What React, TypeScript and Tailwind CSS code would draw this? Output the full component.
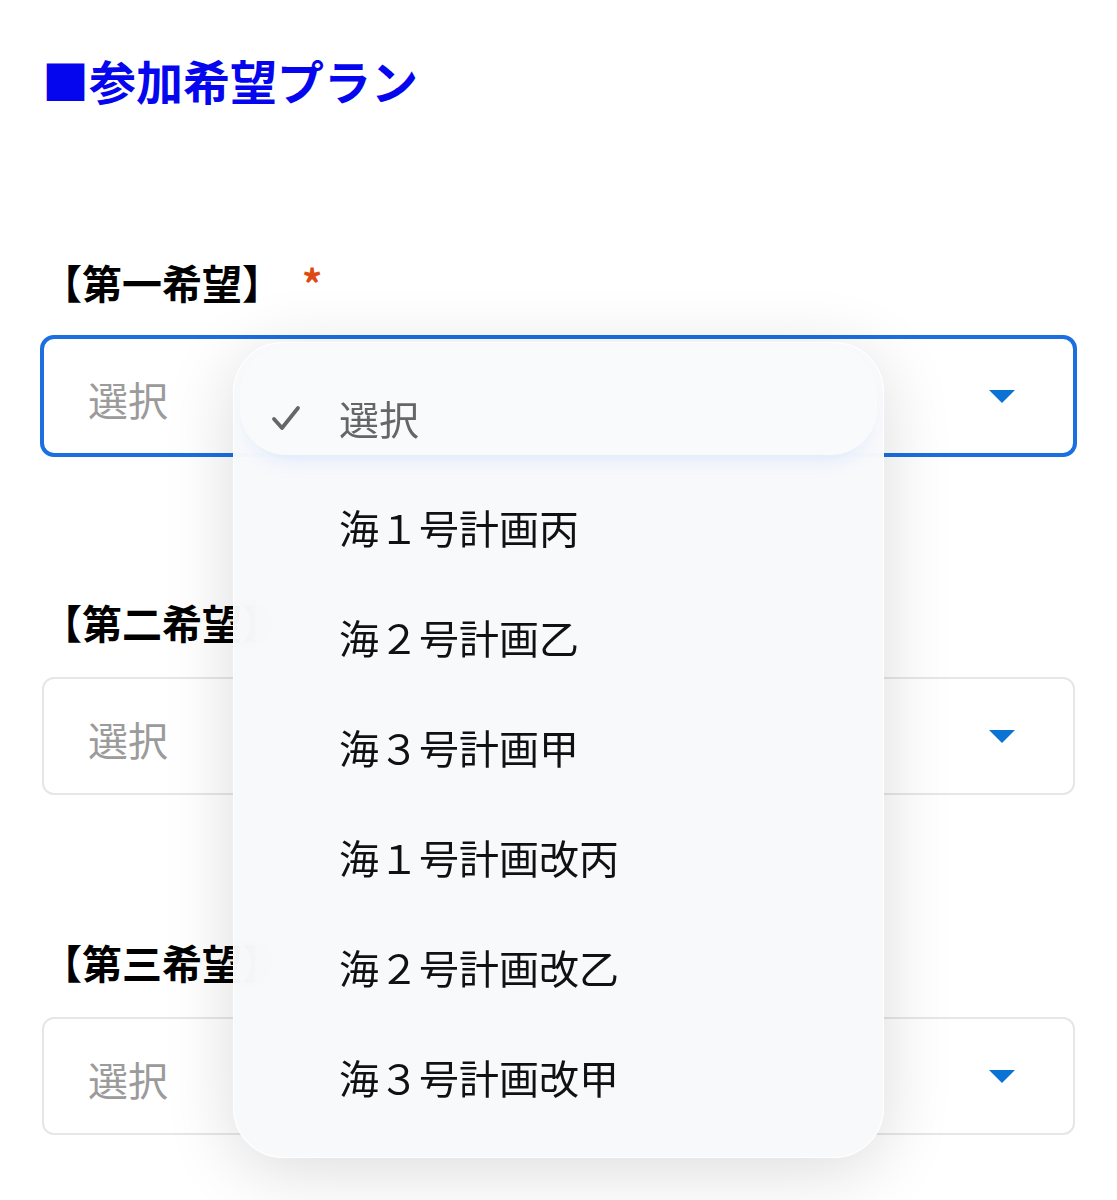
import type React from 'react';

const FONT = '"Noto Sans CJK JP", "Noto Sans", sans-serif';

const PLANS = [
  '海１号計画丙',
  '海２号計画乙',
  '海３号計画甲',
  '海１号計画改丙',
  '海２号計画改乙',
  '海３号計画改甲',
];

/** 下向き三角（セレクトの開閉マーク） */
function Caret(): React.ReactElement {
  return (
    <svg width="26" height="13" viewBox="0 0 26 13" aria-hidden="true">
      <polygon points="0,0 26,0 13,13" fill="#0b73d3" />
    </svg>
  );
}

function Field({ label, focused }: { label: string; focused?: boolean }): React.ReactElement {
  return (
    <div className="flex flex-col">
      <div className="flex items-center h-[48px]">
        <span className="text-[40px] leading-[48px] font-bold text-black">{label}</span>
        <span className="ml-[20px] mt-[2px] text-[40px] leading-[48px] font-bold text-[#dd4a12]">*</span>
      </div>
      <div
        className={
          focused
            ? 'mt-[31px] h-[118px] rounded-[12px] border-2 border-[#1b6fe0] outline-[3px] outline-solid outline-[#1b6fe0] -outline-offset-1 bg-white flex items-center justify-between pl-[44px] pr-[58px]'
            : 'mt-[31px] h-[118px] rounded-[12px] border-2 border-[#e6e6e6] bg-white flex items-center justify-between pl-[44px] pr-[58px]'
        }
      >
        <span className="text-[40px] leading-[48px] text-[#9b9b9b] mt-[6px]">選択</span>
        <Caret />
      </div>
    </div>
  );
}

export default function App(): React.ReactElement {
  return (
    <div className="relative min-h-[1200px] bg-white overflow-hidden" style={{ fontFamily: FONT }}>
      <div className="px-[42px] pt-[52px] flex flex-col">
        {/* 見出し */}
        <h1 className="text-[47px] leading-[56px] font-bold text-[#0505ee]">■参加希望プラン</h1>

        <div className="mt-[150px] flex flex-col gap-[143px]">
          <Field label="【第一希望】" focused />
          <Field label="【第二希望】" />
          <Field label="【第三希望】" />
        </div>
      </div>

      {/* ドロップダウン（開いた状態） */}
      <div
        className="absolute left-[233px] top-[342px] w-[651px] h-[816px] rounded-[50px] bg-[#f8f9fb]/95 backdrop-blur-xl border border-white shadow-[0_12px_70px_rgba(0,0,0,0.14)] pt-[4px] px-[6px]"
        role="listbox"
      >
        <div className="h-[108px] rounded-[46px] bg-white/10 shadow-[0_14px_22px_-12px_rgba(80,145,255,0.2)] flex items-center pt-[34px] pl-[31px]">
          <svg width="30" height="26" viewBox="0 0 30 26" aria-hidden="true">
            <path d="M3 14 L11 23 L27 3" fill="none" stroke="#666666" strokeWidth="3.8" strokeLinecap="round" strokeLinejoin="round" />
          </svg>
          <span className="ml-[38px] text-[40px] leading-[48px] text-[#666666]">選択</span>
        </div>
        <div className="mt-[17px] flex flex-col">
          {PLANS.map((p) => (
            <div key={p} className="h-[110px] flex items-center pl-[99px]">
              <span className="text-[40px] leading-[48px] text-[#111111]">{p}</span>
            </div>
          ))}
        </div>
      </div>
    </div>
  );
}
